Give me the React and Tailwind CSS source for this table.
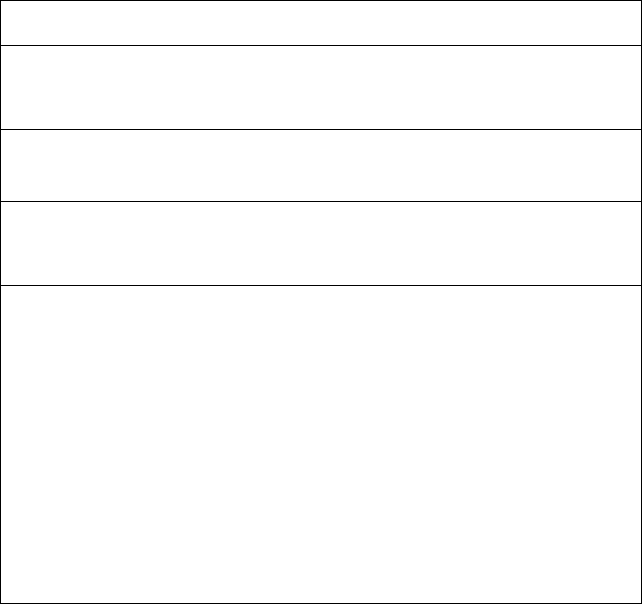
export default function App() {
  return (
    <div className="w-[642px] h-[604px] bg-white">
      <div className="flex flex-col border border-black h-[604px]">
        <div className="h-[45px] border-b border-black"></div>
        <div className="h-[84px] border-b border-black"></div>
        <div className="h-[72px] border-b border-black"></div>
        <div className="h-[84px] border-b border-black"></div>
        <div className="flex-1"></div>
      </div>
    </div>
  );
}
